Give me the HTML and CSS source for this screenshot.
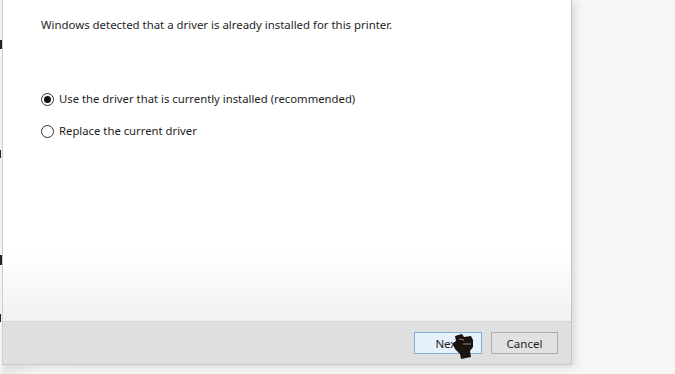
FILE: index.html
```html
<!DOCTYPE html>
<html>
<head>
<meta charset="utf-8">
<link rel="stylesheet" href="styles.css">
</head>
<body>
<div class="screen">
  <div class="edge">
    <span class="mark m1"></span>
    <span class="mark m2"></span>
    <span class="mark m3"></span>
    <span class="mark m4"></span>
  </div>
  <div class="dialog">
    <div class="content">
      <p class="intro">Windows detected that a driver is already installed for this printer.</p>
      <div class="options">
        <label class="option"><span class="radio checked"></span><span class="opt-text">Use the driver that is currently installed (recommended)</span></label>
        <label class="option"><span class="radio"></span><span class="opt-text">Replace the current driver</span></label>
      </div>
    </div>
    <div class="footer">
      <button class="btn primary">Next</button>
      <button class="btn">Cancel</button>
      <svg class="cursor" width="26" height="28" viewBox="0 0 26 28">
        <path d="M5 3 L12 1 L14 4 L21 3 L23 7 L23 14 L20 18 L21 24 L11 26 L10 21 L5 16 L3 10 L6 8 Z" fill="#1a1410"/>
        <path d="M9 6 L14 7 M13 11 L21 11" stroke="#fff" stroke-width="1" fill="none" opacity="0.5"/>
      </svg>
    </div>
  </div>
</div>
</body>
</html>
```
FILE: styles.css
```css
html, body {
  margin: 0;
  padding: 0;
}
body {
  width: 675px;
  height: 374px;
  overflow: hidden;
  background: #f2f2f2;
  font-family: "Noto Sans", "Open Sans", sans-serif;
}
.screen {
  display: flex;
  height: 374px;
  background: linear-gradient(to right, #eaeaea 0px, #f7f7f7 40px, #f6f6f6 100%);
}
.edge {
  width: 2px;
  position: relative;
  background: #f2f2f2;
}
.mark {
  position: absolute;
  left: 0;
  width: 2px;
  background: #222;
}
.m1 { top: 40px; height: 9px; }
.m2 { top: 150px; height: 8px; width: 1px; }
.m3 { top: 255px; height: 10px; }
.m4 { top: 314px; height: 8px; width: 1px; }
.dialog {
  width: 568px;
  height: 364px;
  background: #fff;
  border-left: 1px solid #cfcfcf;
  border-right: 1px solid #c4c4c4;
  border-bottom: 1px solid #c8c8c8;
  display: flex;
  flex-direction: column;
  box-shadow: 3px 2px 8px rgba(0,0,0,0.12);
}
.content {
  flex: 1;
  padding: 17px 0 0 38px;
  background: linear-gradient(to bottom, #ffffff 0px, #ffffff 250px, #f1f1f1 100%);
}
.intro {
  margin: 0;
  font-size: 11.4px;
  line-height: 16px;
  color: #1e1e1e;
}
.options {
  margin-top: 58px;
  display: flex;
  flex-direction: column;
  gap: 16px;
}
.option {
  display: flex;
  align-items: center;
  gap: 5px;
  font-size: 11.3px;
  line-height: 16px;
  color: #1e1e1e;
}
.radio {
  width: 11px;
  height: 11px;
  border: 1px solid #333;
  border-radius: 50%;
  background: #fff;
  position: relative;
  flex: none;
}
.radio.checked::after {
  content: "";
  position: absolute;
  left: 2px;
  top: 2px;
  width: 7px;
  height: 7px;
  border-radius: 50%;
  background: #111;
}
.footer {
  border-top: 1px solid #d6d6d6;
  background: #dfdfdf;
  display: flex;
  justify-content: flex-end;
  align-items: flex-start;
  gap: 9px;
  padding: 10px 13px 0 0;
  box-sizing: border-box;
  height: 43px;
  position: relative;
}
.btn {
  height: 22px;
  width: 67px;
  font-family: inherit;
  font-size: 11.5px;
  color: #1e1e1e;
  background: #e1e1e1;
  border: 1px solid #adadad;
  padding: 0;
  margin: 0;
}
.btn.primary {
  width: 68px;
  background: #e5f1fb;
  border-color: #7fb0de;
}
.cursor {
  position: absolute;
  left: 447px;
  top: 11px;
}
```
